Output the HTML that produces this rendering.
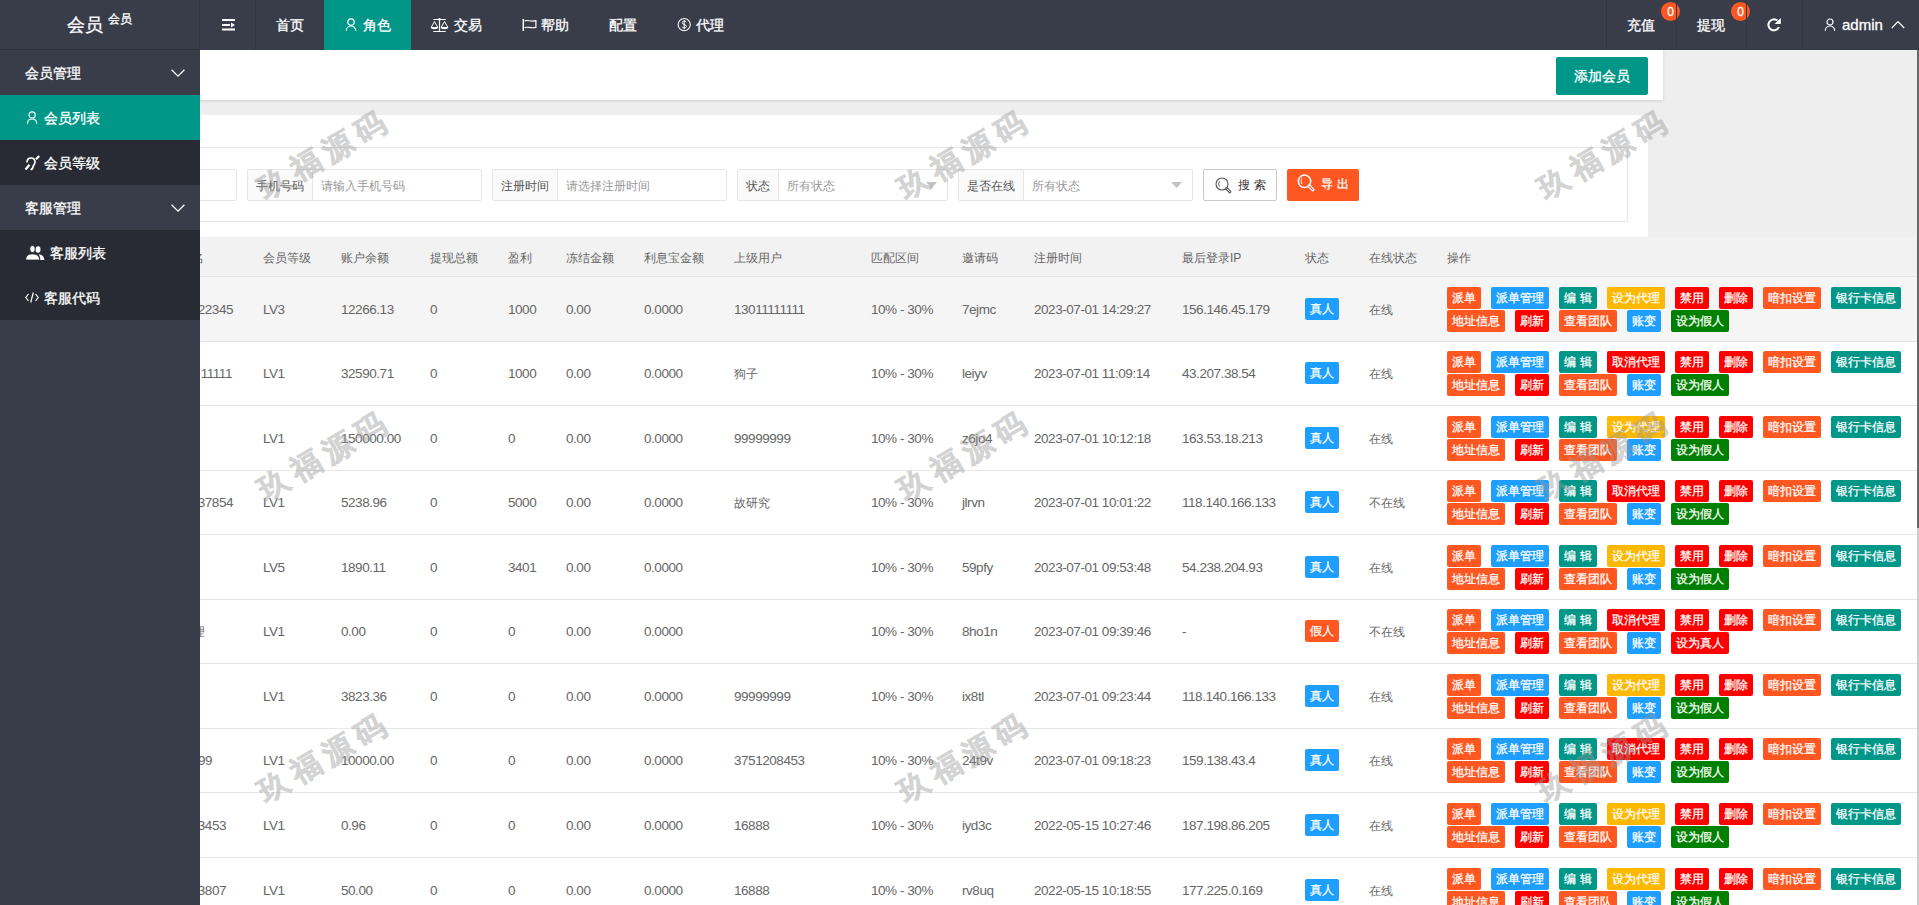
<!DOCTYPE html>
<html><head><meta charset="utf-8"><title>会员列表</title>
<style>
*{box-sizing:border-box}
html,body{margin:0;padding:0}
body{width:1919px;height:905px;overflow:hidden;position:relative;background:#EEEEEE;font-family:"Liberation Sans",sans-serif;font-size:14px;color:#666}
.abs{position:absolute}
#hd{position:absolute;left:0;top:0;width:1919px;height:50px;background:#393D49;z-index:20}
#hd .t{position:absolute;top:15px;height:20px;line-height:20px;color:#fff;font-size:14px;white-space:nowrap;-webkit-text-stroke:0.3px #fff}
#hd .sep{position:absolute;top:0;width:1px;height:50px;background:#33363F;z-index:4}
#hd svg{position:absolute}
#logo{position:absolute;left:0;top:0;width:200px;height:50px;border-bottom:1px solid #2E313B}
#side{position:absolute;left:0;top:50px;width:200px;height:855px;background:#393D49;z-index:15}
#side .it{position:absolute;left:0;width:200px;height:45px}
#side .t{position:absolute;height:20px;line-height:20px;color:#fff;font-size:14px;white-space:nowrap;-webkit-text-stroke:0.3px #fff}
#side svg{position:absolute}
.card{position:absolute;background:#fff}
.grp{position:absolute;top:169px;height:32px;border:1px solid #E6E6E6;border-radius:2px;background:#fff}
.grp .lb{position:absolute;left:0;top:0;height:30px;background:#FAFAFA;border-right:1px solid #E6E6E6}
.grp .lt{position:absolute;top:5.5px;height:20px;line-height:20px;font-size:12px;color:#555;white-space:nowrap}
.grp .ph{position:absolute;top:5.5px;height:20px;line-height:20px;font-size:12px;color:#999;white-space:nowrap}
#tbl{position:absolute;left:0;top:237px;width:1917px;height:668px;background:#fff;overflow:hidden}
.thead{position:absolute;left:0;top:237px;width:1917px;height:40px;background:#F2F2F2;border-bottom:1px solid #E6E6E6}
.ln{position:absolute;left:0;width:1917px;height:1px;background:#E6E6E6}
.hov{position:absolute;left:0;top:277px;width:1917px;height:64px;background:#F5F5F5}
.c{position:absolute;height:20px;line-height:20px;font-size:13.5px;color:#666;white-space:nowrap;letter-spacing:-0.45px;margin-top:1px}
.c.cj{font-size:12px;letter-spacing:0;margin-top:1px}
.b{position:absolute;height:22px;line-height:23px;border-radius:2px;color:#fff;font-size:12px;-webkit-text-stroke:0.25px #fff;text-align:center;white-space:nowrap}
.wm{position:absolute;width:200px;height:40px;line-height:40px;text-align:center;font-size:30px;font-weight:700;color:#999;-webkit-text-stroke:0.7px #999;opacity:0.42;letter-spacing:7px;transform:rotate(-30deg);z-index:30;white-space:nowrap}
#sb{position:absolute;left:1917px;top:50px;width:2px;height:855px;background:#CDCDCD;z-index:25}
#sb div{position:absolute;left:0;top:0;width:2px;height:478px;background:#686868}
</style></head>
<body>
<!-- header -->
<div id="hd">
  <div id="logo"></div>
  <span class="t" style="left:67px;top:13px;font-size:18px;height:24px;line-height:24px">会员</span>
  <span class="t" style="left:108px;top:11px;font-size:12px;height:16px;line-height:16px">会员</span>
  <div class="sep" style="left:199px"></div>
  <!-- toggle icon -->
  <svg style="left:222px;top:19px" width="13" height="12" viewBox="0 0 13 12"><rect x="0" y="0" width="13" height="2" fill="#fff"/><rect x="0" y="5" width="8" height="2" fill="#fff"/><path d="M9 3.5 L13 6 L9 8.5Z" fill="#fff"/><rect x="0" y="9.5" width="13" height="2" fill="#fff"/></svg>
  <div class="sep" style="left:255px"></div>
  <span class="t" style="left:276px">首页</span>
  <div class="abs" style="left:324px;top:0;width:87px;height:50px;background:#009688"></div>
  <svg style="left:344px;top:18px" width="14" height="14" viewBox="0 0 14 14"><circle cx="7" cy="4.1" r="3.2" fill="none" stroke="#fff" stroke-width="1.2"/><path d="M2.3 12.7 C2.3 10 4.2 8 7 8 C9.8 8 11.7 10 11.7 12.7" fill="none" stroke="#fff" stroke-width="1.2"/></svg>
  <span class="t" style="left:363px">角色</span>
  <!-- balance icon -->
  <svg style="left:429px;top:17px" width="21" height="17" viewBox="0 0 21 17"><path d="M4.3 2.5 H16.7 M10.5 2.5 V14.5 M4.3 14.5 H16.7" stroke="#fff" stroke-width="1.2" fill="none"/><circle cx="10.5" cy="2.3" r="1.2" fill="#fff"/><path d="M5.5 4.5 L2.3 10.2 M5.5 4.5 L8.7 10.2 M15.5 4.5 L12.3 10.2 M15.5 4.5 L18.7 10.2" stroke="#fff" stroke-width="1" fill="none"/><path d="M1.8 10 H9.2 A3.7 2.2 0 0 1 1.8 10 Z M11.8 10 H19.2 A3.7 2.2 0 0 1 11.8 10 Z" fill="#fff"/></svg>
  <span class="t" style="left:454px">交易</span>
  <!-- flag -->
  <svg style="left:522px;top:18px" width="15" height="14" viewBox="0 0 15 14"><path d="M1.3 1 V13" stroke="#fff" stroke-width="1.5"/><path d="M2.6 2.9 C5.5 1.4 8.5 4.2 13.9 2.7 V9.3 C8.5 10.8 5.5 8.2 2.6 9.6" stroke="#fff" stroke-width="1.2" fill="none"/></svg>
  <span class="t" style="left:541px">帮助</span>
  <span class="t" style="left:609px">配置</span>
  <!-- dollar circle -->
  <svg style="left:677px;top:17px" width="15" height="15" viewBox="0 0 15 15"><circle cx="7.2" cy="7.6" r="6.1" stroke="#fff" stroke-width="1.1" fill="none"/><path d="M9.2 5.3 C8.8 4.4 8 4.1 7.1 4.1 C5.9 4.1 5.2 4.8 5.2 5.7 C5.2 7.8 9.3 7 9.3 9.4 C9.3 10.4 8.4 11 7.2 11 C6.1 11 5.3 10.5 5 9.7 M7.2 3 V12.2" stroke="#fff" stroke-width="1" fill="none"/></svg>
  <span class="t" style="left:696px">代理</span>

  <div class="sep" style="left:1606px"></div>
  <span class="t" style="left:1627px;top:15px">充值</span>
  <div class="abs" style="left:1661px;top:2px;width:19px;height:19px;border-radius:50%;background:#FF5722;color:#fff;font-size:12px;line-height:20px;text-align:center;z-index:3;-webkit-text-stroke:0.3px #fff">0</div>
  <div class="sep" style="left:1676px"></div>
  <span class="t" style="left:1697px;top:15px">提现</span>
  <div class="abs" style="left:1731px;top:2px;width:19px;height:19px;border-radius:50%;background:#FF5722;color:#fff;font-size:12px;line-height:20px;text-align:center;z-index:3;-webkit-text-stroke:0.3px #fff">0</div>
  <div class="sep" style="left:1746px"></div>
  <!-- refresh -->
  <svg style="left:1766px;top:17px" width="16" height="16" viewBox="0 0 16 16"><path d="M11.4 3.6 A5.5 5.5 0 1 0 12.9 10.1" stroke="#fff" stroke-width="2" fill="none"/><path d="M14.8 1 V7.1 H8.6 Z" fill="#fff"/></svg>
  <div class="sep" style="left:1802px"></div>
  <svg style="left:1823px;top:18px" width="14" height="14" viewBox="0 0 14 14"><circle cx="7" cy="4" r="3" fill="none" stroke="#fff" stroke-width="1.2"/><path d="M2.3 12.7 C2.3 10 4.2 8 7 8 C9.8 8 11.7 10 11.7 12.7" fill="none" stroke="#fff" stroke-width="1.2"/></svg>
  <span class="t" style="left:1842px;top:15px;font-size:15px">admin</span>
  <svg style="left:1891px;top:20px" width="14" height="9" viewBox="0 0 14 9"><path d="M0.8 8 L7 1.6 L13.2 8" stroke="#fff" stroke-width="1.2" fill="none"/></svg>
</div>

<!-- sidebar -->
<div id="side">
  <div class="it" style="top:0"></div>
  <span class="t" style="left:25px;top:13px">会员管理</span>
  <svg style="left:171px;top:19px" width="14" height="9" viewBox="0 0 14 9"><path d="M0.6 0.8 L7 7.2 L13.4 0.8" stroke="#fff" stroke-width="1.3" fill="none"/></svg>
  <div class="it" style="top:45px;background:#009688"></div>
  <svg style="left:26px;top:60px" width="13" height="15" viewBox="0 0 13 15"><circle cx="6.1" cy="4.9" r="3.1" fill="none" stroke="#fff" stroke-width="1.2"/><path d="M1.5 13.8 C1.5 10.8 3.5 9 6.1 9 C8.7 9 10.7 10.8 10.7 13.8" fill="none" stroke="#fff" stroke-width="1.2"/></svg>
  <span class="t" style="left:44px;top:58px">会员列表</span>
  <div class="it" style="top:90px;background:#282B33"></div>
  <svg style="left:24px;top:104px" width="16" height="17" viewBox="0 0 16 17"><path d="M3 8.5 C3 5 5 4 7 4 C9.5 4 11 5.5 11 8 C11 10 9.5 11 9 13 C8.7 14.5 8 15.5 6.5 15.5" stroke="#fff" stroke-width="1.7" fill="none"/><path d="M1.5 15.5 L5.5 10.8 M12 5.2 L15.2 2" stroke="#fff" stroke-width="2.3" fill="none"/></svg>
  <span class="t" style="left:44px;top:103px">会员等级</span>
  <div class="it" style="top:135px"></div>
  <span class="t" style="left:25px;top:148px">客服管理</span>
  <svg style="left:171px;top:154px" width="14" height="9" viewBox="0 0 14 9"><path d="M0.6 0.8 L7 7.2 L13.4 0.8" stroke="#fff" stroke-width="1.3" fill="none"/></svg>
  <div class="it" style="top:180px;height:90px;background:#282B33"></div>
  <svg style="left:25px;top:195px" width="20" height="16" viewBox="0 0 20 16"><ellipse cx="13" cy="4.5" rx="2.5" ry="3.3" fill="#fff"/><path d="M13.5 9.2 C17 9.5 19.4 11.5 19.4 15 H15.3 C15.3 12 14.5 10.5 13.5 9.2 Z" fill="#fff"/><ellipse cx="7.5" cy="4" rx="2.7" ry="3.5" fill="#fff" stroke="#282B33" stroke-width="0.8"/><path d="M0.8 15 C0.8 11 3 9 7.5 9 C12 9 14.5 11 14.5 15 Z" fill="#fff" stroke="#282B33" stroke-width="0.8"/></svg>
  <span class="t" style="left:50px;top:193px">客服列表</span>
  <svg style="left:25px;top:242px" width="14" height="11" viewBox="0 0 14 11"><path d="M3.5 2 L0.8 5.5 L3.5 9 M10.5 2 L13.2 5.5 L10.5 9 M8.3 0.5 L5.7 10.5" stroke="#fff" stroke-width="1.2" fill="none"/></svg>
  <span class="t" style="left:44px;top:238px">客服代码</span>
</div>

<!-- cards -->
<div class="card" style="left:0;top:50px;width:1663px;height:50px;box-shadow:0 1px 3px rgba(0,0,0,0.12)"></div>
<div class="abs" style="left:1556px;top:57px;width:92px;height:38px;background:#009688;border-radius:2px;color:#fff;font-size:14px;line-height:38px;text-align:center;z-index:2;-webkit-text-stroke:0.3px #fff">添加会员</div>
<div class="card" style="left:0;top:115px;width:1648px;height:122px"></div>
<div class="abs" style="left:0;top:147px;width:1628px;height:75px;border:1px solid #E6E6E6;border-left:none"></div>

<div class="grp" style="left:100px;width:137px"></div>
<div class="grp" style="left:247px;width:235px"><div class="lb" style="width:65px"></div><span class="lt" style="left:8px">手机号码</span><span class="ph" style="left:73px">请输入手机号码</span></div>
<div class="grp" style="left:492px;width:235px"><div class="lb" style="width:65px"></div><span class="lt" style="left:8px">注册时间</span><span class="ph" style="left:73px">请选择注册时间</span></div>
<div class="grp" style="left:737px;width:211px"><div class="lb" style="width:41px"></div><span class="lt" style="left:8px">状态</span><span class="ph" style="left:49px">所有状态</span>
  <svg style="position:absolute;left:188px;top:12px" width="11" height="6" viewBox="0 0 11 6"><path d="M0 0 H11 L5.5 6Z" fill="#C2C2C2"/></svg></div>
<div class="grp" style="left:958px;width:235px"><div class="lb" style="width:65px"></div><span class="lt" style="left:8px">是否在线</span><span class="ph" style="left:73px">所有状态</span>
  <svg style="position:absolute;left:212px;top:12px" width="11" height="6" viewBox="0 0 11 6"><path d="M0 0 H11 L5.5 6Z" fill="#C2C2C2"/></svg></div>
<div class="abs" style="left:1203px;top:169px;width:74px;height:32px;border:1px solid #C9C9C9;border-radius:2px;background:#fff">
  <svg style="position:absolute;left:11px;top:7px" width="17" height="17" viewBox="0 0 17 17"><circle cx="7" cy="7" r="6" stroke="#555" stroke-width="1.1" fill="none"/><path d="M11.5 11.5 L14.8 14.8" stroke="#555" stroke-width="3" stroke-linecap="round"/><path d="M11.8 11.8 L14.6 14.6" stroke="#fff" stroke-width="1" stroke-linecap="round"/><path d="M4.4 4.2 Q2.9 7 4.4 9.6" stroke="#555" stroke-width="0.9" fill="none"/></svg>
  <span style="position:absolute;left:34px;top:5px;height:20px;line-height:20px;font-size:12px;color:#333;letter-spacing:4px">搜索</span>
</div>
<div class="abs" style="left:1287px;top:169px;width:72px;height:32px;background:#FF5722;border-radius:2px">
  <svg style="position:absolute;left:10px;top:5px" width="18" height="18" viewBox="0 0 18 18"><circle cx="7.5" cy="7.3" r="6.2" stroke="#fff" stroke-width="1.5" fill="none"/><path d="M12.2 12 L15.8 15.6" stroke="#fff" stroke-width="3.4" stroke-linecap="round"/><path d="M12.5 12.3 L15.5 15.3" stroke="#FF5722" stroke-width="1.2" stroke-linecap="round"/><path d="M4.8 4.4 Q3.2 7.3 4.8 10" stroke="#fff" stroke-width="1" fill="none"/></svg>
  <span style="position:absolute;left:34px;top:5px;height:20px;line-height:20px;font-size:12px;color:#fff;letter-spacing:4px;-webkit-text-stroke:0.3px #fff">导出</span>
</div>

<!-- table -->
<div id="tbl"><div style="position:absolute;left:0;top:-237px;width:1917px;height:905px">
<div class="thead"></div>
<span class="c h cj" style="left:192px;top:247px">名</span>
<span class="c h cj" style="left:263px;top:247px">会员等级</span>
<span class="c h cj" style="left:341px;top:247px">账户余额</span>
<span class="c h cj" style="left:430px;top:247px">提现总额</span>
<span class="c h cj" style="left:508px;top:247px">盈利</span>
<span class="c h cj" style="left:566px;top:247px">冻结金额</span>
<span class="c h cj" style="left:644px;top:247px">利息宝金额</span>
<span class="c h cj" style="left:734px;top:247px">上级用户</span>
<span class="c h cj" style="left:871px;top:247px">匹配区间</span>
<span class="c h cj" style="left:962px;top:247px">邀请码</span>
<span class="c h cj" style="left:1034px;top:247px">注册时间</span>
<span class="c h cj" style="left:1182px;top:247px">最后登录IP</span>
<span class="c h cj" style="left:1305px;top:247px">状态</span>
<span class="c h cj" style="left:1369px;top:247px">在线状态</span>
<span class="c h cj" style="left:1447px;top:247px">操作</span>
<div class="hov"></div>
<div class="ln" style="top:341px"></div>
<div class="ln" style="top:405px"></div>
<div class="ln" style="top:470px"></div>
<div class="ln" style="top:534px"></div>
<div class="ln" style="top:599px"></div>
<div class="ln" style="top:663px"></div>
<div class="ln" style="top:728px"></div>
<div class="ln" style="top:792px"></div>
<div class="ln" style="top:857px"></div>
<span class="c" style="right:1684px;top:299px">22345</span>
<span class="c" style="left:263px;top:299px">LV3</span>
<span class="c" style="left:341px;top:299px">12266.13</span>
<span class="c" style="left:430px;top:299px">0</span>
<span class="c" style="left:508px;top:299px">1000</span>
<span class="c" style="left:566px;top:299px">0.00</span>
<span class="c" style="left:644px;top:299px">0.0000</span>
<span class="c" style="left:734px;top:299px">13011111111</span>
<span class="c" style="left:871px;top:299px">10% - 30%</span>
<span class="c" style="left:962px;top:299px">7ejmc</span>
<span class="c" style="left:1034px;top:299px">2023-07-01 14:29:27</span>
<span class="c" style="left:1182px;top:299px">156.146.45.179</span>
<span class="b" style="left:1305px;top:298px;width:34px;background:#1E9FFF">真人</span>
<span class="c cj" style="left:1369px;top:299px">在线</span>
<span class="b" style="left:1447px;top:287px;width:34px;background:#FF5722">派单</span>
<span class="b" style="left:1491px;top:287px;width:58px;background:#1E9FFF">派单管理</span>
<span class="b" style="left:1559px;top:287px;width:38px;background:#009688">编 辑</span>
<span class="b" style="left:1607px;top:287px;width:58px;background:#FFB800">设为代理</span>
<span class="b" style="left:1675px;top:287px;width:34px;background:#FF0000">禁用</span>
<span class="b" style="left:1719px;top:287px;width:34px;background:#FF0000">删除</span>
<span class="b" style="left:1763px;top:287px;width:58px;background:#FF5722">暗扣设置</span>
<span class="b" style="left:1831px;top:287px;width:70px;background:#009688">银行卡信息</span>
<span class="b" style="left:1447px;top:310px;width:58px;background:#FF5722">地址信息</span>
<span class="b" style="left:1515px;top:310px;width:34px;background:#FF0000">刷新</span>
<span class="b" style="left:1559px;top:310px;width:58px;background:#FF5722">查看团队</span>
<span class="b" style="left:1627px;top:310px;width:34px;background:#1E9FFF">账变</span>
<span class="b" style="left:1671px;top:310px;width:58px;background:#008000">设为假人</span>
<span class="c" style="right:1685px;top:363px">11111</span>
<span class="c" style="left:263px;top:363px">LV1</span>
<span class="c" style="left:341px;top:363px">32590.71</span>
<span class="c" style="left:430px;top:363px">0</span>
<span class="c" style="left:508px;top:363px">1000</span>
<span class="c" style="left:566px;top:363px">0.00</span>
<span class="c" style="left:644px;top:363px">0.0000</span>
<span class="c cj" style="left:734px;top:363px">狗子</span>
<span class="c" style="left:871px;top:363px">10% - 30%</span>
<span class="c" style="left:962px;top:363px">leiyv</span>
<span class="c" style="left:1034px;top:363px">2023-07-01 11:09:14</span>
<span class="c" style="left:1182px;top:363px">43.207.38.54</span>
<span class="b" style="left:1305px;top:362px;width:34px;background:#1E9FFF">真人</span>
<span class="c cj" style="left:1369px;top:363px">在线</span>
<span class="b" style="left:1447px;top:351px;width:34px;background:#FF5722">派单</span>
<span class="b" style="left:1491px;top:351px;width:58px;background:#1E9FFF">派单管理</span>
<span class="b" style="left:1559px;top:351px;width:38px;background:#009688">编 辑</span>
<span class="b" style="left:1607px;top:351px;width:58px;background:#FF0000">取消代理</span>
<span class="b" style="left:1675px;top:351px;width:34px;background:#FF0000">禁用</span>
<span class="b" style="left:1719px;top:351px;width:34px;background:#FF0000">删除</span>
<span class="b" style="left:1763px;top:351px;width:58px;background:#FF5722">暗扣设置</span>
<span class="b" style="left:1831px;top:351px;width:70px;background:#009688">银行卡信息</span>
<span class="b" style="left:1447px;top:374px;width:58px;background:#FF5722">地址信息</span>
<span class="b" style="left:1515px;top:374px;width:34px;background:#FF0000">刷新</span>
<span class="b" style="left:1559px;top:374px;width:58px;background:#FF5722">查看团队</span>
<span class="b" style="left:1627px;top:374px;width:34px;background:#1E9FFF">账变</span>
<span class="b" style="left:1671px;top:374px;width:58px;background:#008000">设为假人</span>
<span class="c" style="left:263px;top:428px">LV1</span>
<span class="c" style="left:341px;top:428px">150000.00</span>
<span class="c" style="left:430px;top:428px">0</span>
<span class="c" style="left:508px;top:428px">0</span>
<span class="c" style="left:566px;top:428px">0.00</span>
<span class="c" style="left:644px;top:428px">0.0000</span>
<span class="c" style="left:734px;top:428px">99999999</span>
<span class="c" style="left:871px;top:428px">10% - 30%</span>
<span class="c" style="left:962px;top:428px">z6jo4</span>
<span class="c" style="left:1034px;top:428px">2023-07-01 10:12:18</span>
<span class="c" style="left:1182px;top:428px">163.53.18.213</span>
<span class="b" style="left:1305px;top:427px;width:34px;background:#1E9FFF">真人</span>
<span class="c cj" style="left:1369px;top:428px">在线</span>
<span class="b" style="left:1447px;top:416px;width:34px;background:#FF5722">派单</span>
<span class="b" style="left:1491px;top:416px;width:58px;background:#1E9FFF">派单管理</span>
<span class="b" style="left:1559px;top:416px;width:38px;background:#009688">编 辑</span>
<span class="b" style="left:1607px;top:416px;width:58px;background:#FFB800">设为代理</span>
<span class="b" style="left:1675px;top:416px;width:34px;background:#FF0000">禁用</span>
<span class="b" style="left:1719px;top:416px;width:34px;background:#FF0000">删除</span>
<span class="b" style="left:1763px;top:416px;width:58px;background:#FF5722">暗扣设置</span>
<span class="b" style="left:1831px;top:416px;width:70px;background:#009688">银行卡信息</span>
<span class="b" style="left:1447px;top:439px;width:58px;background:#FF5722">地址信息</span>
<span class="b" style="left:1515px;top:439px;width:34px;background:#FF0000">刷新</span>
<span class="b" style="left:1559px;top:439px;width:58px;background:#FF5722">查看团队</span>
<span class="b" style="left:1627px;top:439px;width:34px;background:#1E9FFF">账变</span>
<span class="b" style="left:1671px;top:439px;width:58px;background:#008000">设为假人</span>
<span class="c" style="right:1684px;top:492px">37854</span>
<span class="c" style="left:263px;top:492px">LV1</span>
<span class="c" style="left:341px;top:492px">5238.96</span>
<span class="c" style="left:430px;top:492px">0</span>
<span class="c" style="left:508px;top:492px">5000</span>
<span class="c" style="left:566px;top:492px">0.00</span>
<span class="c" style="left:644px;top:492px">0.0000</span>
<span class="c cj" style="left:734px;top:492px">故研究</span>
<span class="c" style="left:871px;top:492px">10% - 30%</span>
<span class="c" style="left:962px;top:492px">jlrvn</span>
<span class="c" style="left:1034px;top:492px">2023-07-01 10:01:22</span>
<span class="c" style="left:1182px;top:492px">118.140.166.133</span>
<span class="b" style="left:1305px;top:491px;width:34px;background:#1E9FFF">真人</span>
<span class="c cj" style="left:1369px;top:492px">不在线</span>
<span class="b" style="left:1447px;top:480px;width:34px;background:#FF5722">派单</span>
<span class="b" style="left:1491px;top:480px;width:58px;background:#1E9FFF">派单管理</span>
<span class="b" style="left:1559px;top:480px;width:38px;background:#009688">编 辑</span>
<span class="b" style="left:1607px;top:480px;width:58px;background:#FF0000">取消代理</span>
<span class="b" style="left:1675px;top:480px;width:34px;background:#FF0000">禁用</span>
<span class="b" style="left:1719px;top:480px;width:34px;background:#FF0000">删除</span>
<span class="b" style="left:1763px;top:480px;width:58px;background:#FF5722">暗扣设置</span>
<span class="b" style="left:1831px;top:480px;width:70px;background:#009688">银行卡信息</span>
<span class="b" style="left:1447px;top:503px;width:58px;background:#FF5722">地址信息</span>
<span class="b" style="left:1515px;top:503px;width:34px;background:#FF0000">刷新</span>
<span class="b" style="left:1559px;top:503px;width:58px;background:#FF5722">查看团队</span>
<span class="b" style="left:1627px;top:503px;width:34px;background:#1E9FFF">账变</span>
<span class="b" style="left:1671px;top:503px;width:58px;background:#008000">设为假人</span>
<span class="c" style="left:263px;top:557px">LV5</span>
<span class="c" style="left:341px;top:557px">1890.11</span>
<span class="c" style="left:430px;top:557px">0</span>
<span class="c" style="left:508px;top:557px">3401</span>
<span class="c" style="left:566px;top:557px">0.00</span>
<span class="c" style="left:644px;top:557px">0.0000</span>
<span class="c" style="left:871px;top:557px">10% - 30%</span>
<span class="c" style="left:962px;top:557px">59pfy</span>
<span class="c" style="left:1034px;top:557px">2023-07-01 09:53:48</span>
<span class="c" style="left:1182px;top:557px">54.238.204.93</span>
<span class="b" style="left:1305px;top:556px;width:34px;background:#1E9FFF">真人</span>
<span class="c cj" style="left:1369px;top:557px">在线</span>
<span class="b" style="left:1447px;top:545px;width:34px;background:#FF5722">派单</span>
<span class="b" style="left:1491px;top:545px;width:58px;background:#1E9FFF">派单管理</span>
<span class="b" style="left:1559px;top:545px;width:38px;background:#009688">编 辑</span>
<span class="b" style="left:1607px;top:545px;width:58px;background:#FFB800">设为代理</span>
<span class="b" style="left:1675px;top:545px;width:34px;background:#FF0000">禁用</span>
<span class="b" style="left:1719px;top:545px;width:34px;background:#FF0000">删除</span>
<span class="b" style="left:1763px;top:545px;width:58px;background:#FF5722">暗扣设置</span>
<span class="b" style="left:1831px;top:545px;width:70px;background:#009688">银行卡信息</span>
<span class="b" style="left:1447px;top:568px;width:58px;background:#FF5722">地址信息</span>
<span class="b" style="left:1515px;top:568px;width:34px;background:#FF0000">刷新</span>
<span class="b" style="left:1559px;top:568px;width:58px;background:#FF5722">查看团队</span>
<span class="b" style="left:1627px;top:568px;width:34px;background:#1E9FFF">账变</span>
<span class="b" style="left:1671px;top:568px;width:58px;background:#008000">设为假人</span>
<span class="c cj" style="right:1712px;top:621px">理</span>
<span class="c" style="left:263px;top:621px">LV1</span>
<span class="c" style="left:341px;top:621px">0.00</span>
<span class="c" style="left:430px;top:621px">0</span>
<span class="c" style="left:508px;top:621px">0</span>
<span class="c" style="left:566px;top:621px">0.00</span>
<span class="c" style="left:644px;top:621px">0.0000</span>
<span class="c" style="left:871px;top:621px">10% - 30%</span>
<span class="c" style="left:962px;top:621px">8ho1n</span>
<span class="c" style="left:1034px;top:621px">2023-07-01 09:39:46</span>
<span class="c" style="left:1182px;top:621px">-</span>
<span class="b" style="left:1305px;top:620px;width:34px;background:#FF5722">假人</span>
<span class="c cj" style="left:1369px;top:621px">不在线</span>
<span class="b" style="left:1447px;top:609px;width:34px;background:#FF5722">派单</span>
<span class="b" style="left:1491px;top:609px;width:58px;background:#1E9FFF">派单管理</span>
<span class="b" style="left:1559px;top:609px;width:38px;background:#009688">编 辑</span>
<span class="b" style="left:1607px;top:609px;width:58px;background:#FF0000">取消代理</span>
<span class="b" style="left:1675px;top:609px;width:34px;background:#FF0000">禁用</span>
<span class="b" style="left:1719px;top:609px;width:34px;background:#FF0000">删除</span>
<span class="b" style="left:1763px;top:609px;width:58px;background:#FF5722">暗扣设置</span>
<span class="b" style="left:1831px;top:609px;width:70px;background:#009688">银行卡信息</span>
<span class="b" style="left:1447px;top:632px;width:58px;background:#FF5722">地址信息</span>
<span class="b" style="left:1515px;top:632px;width:34px;background:#FF0000">刷新</span>
<span class="b" style="left:1559px;top:632px;width:58px;background:#FF5722">查看团队</span>
<span class="b" style="left:1627px;top:632px;width:34px;background:#1E9FFF">账变</span>
<span class="b" style="left:1671px;top:632px;width:58px;background:#FF0000">设为真人</span>
<span class="c" style="left:263px;top:686px">LV1</span>
<span class="c" style="left:341px;top:686px">3823.36</span>
<span class="c" style="left:430px;top:686px">0</span>
<span class="c" style="left:508px;top:686px">0</span>
<span class="c" style="left:566px;top:686px">0.00</span>
<span class="c" style="left:644px;top:686px">0.0000</span>
<span class="c" style="left:734px;top:686px">99999999</span>
<span class="c" style="left:871px;top:686px">10% - 30%</span>
<span class="c" style="left:962px;top:686px">ix8tl</span>
<span class="c" style="left:1034px;top:686px">2023-07-01 09:23:44</span>
<span class="c" style="left:1182px;top:686px">118.140.166.133</span>
<span class="b" style="left:1305px;top:685px;width:34px;background:#1E9FFF">真人</span>
<span class="c cj" style="left:1369px;top:686px">在线</span>
<span class="b" style="left:1447px;top:674px;width:34px;background:#FF5722">派单</span>
<span class="b" style="left:1491px;top:674px;width:58px;background:#1E9FFF">派单管理</span>
<span class="b" style="left:1559px;top:674px;width:38px;background:#009688">编 辑</span>
<span class="b" style="left:1607px;top:674px;width:58px;background:#FFB800">设为代理</span>
<span class="b" style="left:1675px;top:674px;width:34px;background:#FF0000">禁用</span>
<span class="b" style="left:1719px;top:674px;width:34px;background:#FF0000">删除</span>
<span class="b" style="left:1763px;top:674px;width:58px;background:#FF5722">暗扣设置</span>
<span class="b" style="left:1831px;top:674px;width:70px;background:#009688">银行卡信息</span>
<span class="b" style="left:1447px;top:697px;width:58px;background:#FF5722">地址信息</span>
<span class="b" style="left:1515px;top:697px;width:34px;background:#FF0000">刷新</span>
<span class="b" style="left:1559px;top:697px;width:58px;background:#FF5722">查看团队</span>
<span class="b" style="left:1627px;top:697px;width:34px;background:#1E9FFF">账变</span>
<span class="b" style="left:1671px;top:697px;width:58px;background:#008000">设为假人</span>
<span class="c" style="right:1705px;top:750px">99</span>
<span class="c" style="left:263px;top:750px">LV1</span>
<span class="c" style="left:341px;top:750px">10000.00</span>
<span class="c" style="left:430px;top:750px">0</span>
<span class="c" style="left:508px;top:750px">0</span>
<span class="c" style="left:566px;top:750px">0.00</span>
<span class="c" style="left:644px;top:750px">0.0000</span>
<span class="c" style="left:734px;top:750px">3751208453</span>
<span class="c" style="left:871px;top:750px">10% - 30%</span>
<span class="c" style="left:962px;top:750px">24t9v</span>
<span class="c" style="left:1034px;top:750px">2023-07-01 09:18:23</span>
<span class="c" style="left:1182px;top:750px">159.138.43.4</span>
<span class="b" style="left:1305px;top:749px;width:34px;background:#1E9FFF">真人</span>
<span class="c cj" style="left:1369px;top:750px">在线</span>
<span class="b" style="left:1447px;top:738px;width:34px;background:#FF5722">派单</span>
<span class="b" style="left:1491px;top:738px;width:58px;background:#1E9FFF">派单管理</span>
<span class="b" style="left:1559px;top:738px;width:38px;background:#009688">编 辑</span>
<span class="b" style="left:1607px;top:738px;width:58px;background:#FF0000">取消代理</span>
<span class="b" style="left:1675px;top:738px;width:34px;background:#FF0000">禁用</span>
<span class="b" style="left:1719px;top:738px;width:34px;background:#FF0000">删除</span>
<span class="b" style="left:1763px;top:738px;width:58px;background:#FF5722">暗扣设置</span>
<span class="b" style="left:1831px;top:738px;width:70px;background:#009688">银行卡信息</span>
<span class="b" style="left:1447px;top:761px;width:58px;background:#FF5722">地址信息</span>
<span class="b" style="left:1515px;top:761px;width:34px;background:#FF0000">刷新</span>
<span class="b" style="left:1559px;top:761px;width:58px;background:#FF5722">查看团队</span>
<span class="b" style="left:1627px;top:761px;width:34px;background:#1E9FFF">账变</span>
<span class="b" style="left:1671px;top:761px;width:58px;background:#008000">设为假人</span>
<span class="c" style="right:1691px;top:815px">3453</span>
<span class="c" style="left:263px;top:815px">LV1</span>
<span class="c" style="left:341px;top:815px">0.96</span>
<span class="c" style="left:430px;top:815px">0</span>
<span class="c" style="left:508px;top:815px">0</span>
<span class="c" style="left:566px;top:815px">0.00</span>
<span class="c" style="left:644px;top:815px">0.0000</span>
<span class="c" style="left:734px;top:815px">16888</span>
<span class="c" style="left:871px;top:815px">10% - 30%</span>
<span class="c" style="left:962px;top:815px">iyd3c</span>
<span class="c" style="left:1034px;top:815px">2022-05-15 10:27:46</span>
<span class="c" style="left:1182px;top:815px">187.198.86.205</span>
<span class="b" style="left:1305px;top:814px;width:34px;background:#1E9FFF">真人</span>
<span class="c cj" style="left:1369px;top:815px">在线</span>
<span class="b" style="left:1447px;top:803px;width:34px;background:#FF5722">派单</span>
<span class="b" style="left:1491px;top:803px;width:58px;background:#1E9FFF">派单管理</span>
<span class="b" style="left:1559px;top:803px;width:38px;background:#009688">编 辑</span>
<span class="b" style="left:1607px;top:803px;width:58px;background:#FFB800">设为代理</span>
<span class="b" style="left:1675px;top:803px;width:34px;background:#FF0000">禁用</span>
<span class="b" style="left:1719px;top:803px;width:34px;background:#FF0000">删除</span>
<span class="b" style="left:1763px;top:803px;width:58px;background:#FF5722">暗扣设置</span>
<span class="b" style="left:1831px;top:803px;width:70px;background:#009688">银行卡信息</span>
<span class="b" style="left:1447px;top:826px;width:58px;background:#FF5722">地址信息</span>
<span class="b" style="left:1515px;top:826px;width:34px;background:#FF0000">刷新</span>
<span class="b" style="left:1559px;top:826px;width:58px;background:#FF5722">查看团队</span>
<span class="b" style="left:1627px;top:826px;width:34px;background:#1E9FFF">账变</span>
<span class="b" style="left:1671px;top:826px;width:58px;background:#008000">设为假人</span>
<span class="c" style="right:1691px;top:880px">3807</span>
<span class="c" style="left:263px;top:880px">LV1</span>
<span class="c" style="left:341px;top:880px">50.00</span>
<span class="c" style="left:430px;top:880px">0</span>
<span class="c" style="left:508px;top:880px">0</span>
<span class="c" style="left:566px;top:880px">0.00</span>
<span class="c" style="left:644px;top:880px">0.0000</span>
<span class="c" style="left:734px;top:880px">16888</span>
<span class="c" style="left:871px;top:880px">10% - 30%</span>
<span class="c" style="left:962px;top:880px">rv8uq</span>
<span class="c" style="left:1034px;top:880px">2022-05-15 10:18:55</span>
<span class="c" style="left:1182px;top:880px">177.225.0.169</span>
<span class="b" style="left:1305px;top:879px;width:34px;background:#1E9FFF">真人</span>
<span class="c cj" style="left:1369px;top:880px">在线</span>
<span class="b" style="left:1447px;top:868px;width:34px;background:#FF5722">派单</span>
<span class="b" style="left:1491px;top:868px;width:58px;background:#1E9FFF">派单管理</span>
<span class="b" style="left:1559px;top:868px;width:38px;background:#009688">编 辑</span>
<span class="b" style="left:1607px;top:868px;width:58px;background:#FFB800">设为代理</span>
<span class="b" style="left:1675px;top:868px;width:34px;background:#FF0000">禁用</span>
<span class="b" style="left:1719px;top:868px;width:34px;background:#FF0000">删除</span>
<span class="b" style="left:1763px;top:868px;width:58px;background:#FF5722">暗扣设置</span>
<span class="b" style="left:1831px;top:868px;width:70px;background:#009688">银行卡信息</span>
<span class="b" style="left:1447px;top:891px;width:58px;background:#FF5722">地址信息</span>
<span class="b" style="left:1515px;top:891px;width:34px;background:#FF0000">刷新</span>
<span class="b" style="left:1559px;top:891px;width:58px;background:#FF5722">查看团队</span>
<span class="b" style="left:1627px;top:891px;width:34px;background:#1E9FFF">账变</span>
<span class="b" style="left:1671px;top:891px;width:58px;background:#008000">设为假人</span>
</div></div>

<div class="wm" style="left:225px;top:134px">玖福源码</div>
<div class="wm" style="left:865px;top:134px">玖福源码</div>
<div class="wm" style="left:1505px;top:134px">玖福源码</div>
<div class="wm" style="left:225px;top:435px">玖福源码</div>
<div class="wm" style="left:865px;top:435px">玖福源码</div>
<div class="wm" style="left:1505px;top:435px">玖福源码</div>
<div class="wm" style="left:225px;top:737px">玖福源码</div>
<div class="wm" style="left:865px;top:737px">玖福源码</div>
<div class="wm" style="left:1505px;top:737px">玖福源码</div>
<div id="sb"><div></div></div>
</body></html>
